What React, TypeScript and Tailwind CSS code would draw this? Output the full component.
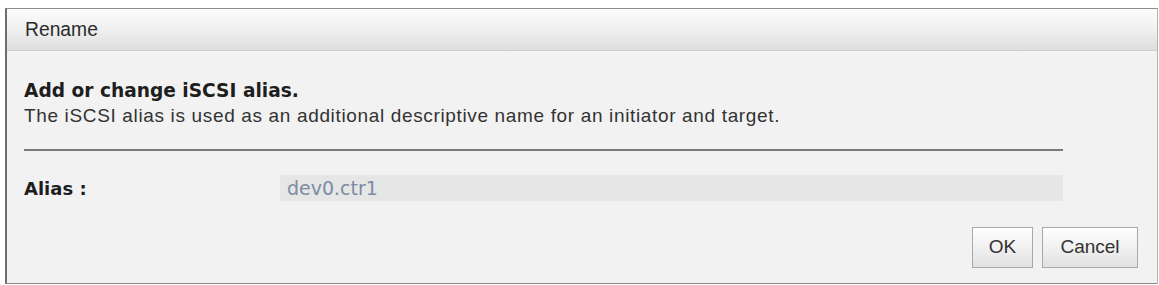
import React from "react";

export default function App() {
  return (
    <div className="w-[1159px] h-[285px] bg-white pt-[8px] pl-[5px] overflow-hidden">
      <div className="w-[1153px] h-[276px] border border-[#8c8c8c] border-l-[2px] border-l-[#6e6e6e] border-r-[#b5b5b5] bg-[#f2f2f2] flex flex-col">
        <div className="h-[42px] shrink-0 bg-gradient-to-b from-[#fcfcfc] via-[#f0f0f0] to-[#dedede] border-b border-[#d0d0d0] flex items-center pl-[18px] pt-[2px]">
          <span className="text-[19.3px] text-[#2a2a2a] font-['Liberation_Sans',Arial,sans-serif]">Rename</span>
        </div>
        <div className="flex-1 flex flex-col pl-[17px] pr-[94px] font-['Liberation_Sans',Arial,sans-serif]">
          <div className="mt-[29px] h-[22px] flex items-center text-[18.6px] font-bold text-[#1e1e1e] font-['DejaVu_Sans',sans-serif]">
            Add or change iSCSI alias.
          </div>
          <div className="mt-[3px] h-[22px] flex items-center text-[19px] tracking-[0.65px] text-[#333] whitespace-nowrap">
            The iSCSI alias is used as an additional descriptive name for an initiator and target.
          </div>
          <div className="mt-[22px] h-[2px] bg-[#7a7a7a]" />
          <div className="mt-[24px] flex items-center h-[26px]">
            <div className="w-[256px] text-[18px] font-bold text-[#1e1e1e] font-['DejaVu_Sans',sans-serif]">Alias :</div>
            <div className="flex-1 h-[26px] bg-[#e6e6e6] flex items-center pl-[7px] text-[19px] text-[#7d8ba3] font-['DejaVu_Sans',sans-serif]">
              dev0.ctr1
            </div>
          </div>
          <div className="mt-[26px] flex justify-end gap-[9px] -mr-[75px]">
            <button className="w-[61px] h-[41px] border border-[#a8a8a8] bg-gradient-to-b from-[#ffffff] to-[#e2e2e2] text-[19px] text-[#333] font-['Liberation_Sans',Arial,sans-serif]">
              OK
            </button>
            <button className="w-[96px] h-[41px] border border-[#a8a8a8] bg-gradient-to-b from-[#ffffff] to-[#e2e2e2] text-[19px] text-[#333] font-['Liberation_Sans',Arial,sans-serif]">
              Cancel
            </button>
          </div>
        </div>
      </div>
    </div>
  );
}
